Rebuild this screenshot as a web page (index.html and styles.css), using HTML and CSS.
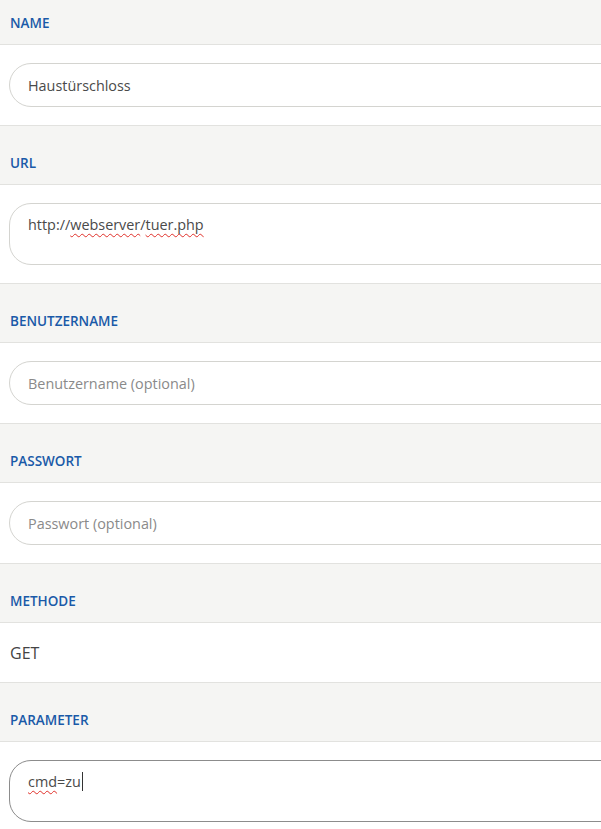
FILE: index.html
```html
<!DOCTYPE html>
<html lang="de">
<head>
<meta charset="utf-8">
<link rel="stylesheet" href="styles.css">
</head>
<body>
<div class="form">
  <div class="head"><span class="label">NAME</span></div>
  <div class="row"><div class="field">Haustürschloss</div></div>

  <div class="head"><span class="label">URL</span></div>
  <div class="row"><div class="field area">http://<span class="sp">webserver</span>/<span class="sp">tuer.php</span></div></div>

  <div class="head"><span class="label">BENUTZERNAME</span></div>
  <div class="row"><div class="field ph">Benutzername (optional)</div></div>

  <div class="head"><span class="label">PASSWORT</span></div>
  <div class="row"><div class="field ph">Passwort (optional)</div></div>

  <div class="head"><span class="label">METHODE</span></div>
  <div class="row plain">GET</div>

  <div class="head"><span class="label">PARAMETER</span></div>
  <div class="row"><div class="field area focus"><span class="sp">cmd</span>=zu<span class="caret"></span></div></div>
</div>
</body>
</html>
```
FILE: styles.css
```css
html, body {
  margin: 0;
  padding: 0;
  background: #fff;
  overflow: hidden;
}
body {
  font-family: "Open Sans", "Liberation Sans", sans-serif;
}
.form {
  margin-top: -14px;
  display: flex;
  flex-direction: column;
  overflow: hidden;
}
.head {
  box-sizing: border-box;
  height: 59px;
  background: #f5f5f3;
  border-bottom: 1px solid #e2e2df;
  display: flex;
  align-items: flex-end;
  padding: 0 0 12px 10px;
}
.label {
  font-size: 13.5px;
  line-height: 18px;
  font-weight: 600;
  color: #1a5aa8;
}
.row {
  padding: 18px 0 18px 9px;
  border-bottom: 1px solid #e2e2df;
  margin-right: -40px;
}
.field {
  box-sizing: border-box;
  height: 44px;
  border: 1px solid #d4d4d0;
  border-radius: 22px;
  padding: 0 18px;
  display: flex;
  align-items: center;
  font-size: 14.4px;
  color: #4a4a4a;
  background: #fff;
}
.field.ph {
  color: #8a8a8a;
}
.field.area {
  height: 62px;
  align-items: flex-start;
  padding-top: 11px;
}
.field.focus {
  border-color: #8c8c8c;
}
.sp {
  text-decoration: underline wavy #e0302a;
  text-decoration-thickness: 1px;
  text-underline-offset: 3px;
}
.caret {
  display: inline-block;
  width: 1px;
  height: 19px;
  background: #333;
  margin-left: 1px;
  vertical-align: -4px;
}
.row.plain {
  box-sizing: border-box;
  height: 60px;
  padding: 0 0 0 10px;
  display: flex;
  align-items: center;
  font-size: 16px;
  color: #444;
}
```
